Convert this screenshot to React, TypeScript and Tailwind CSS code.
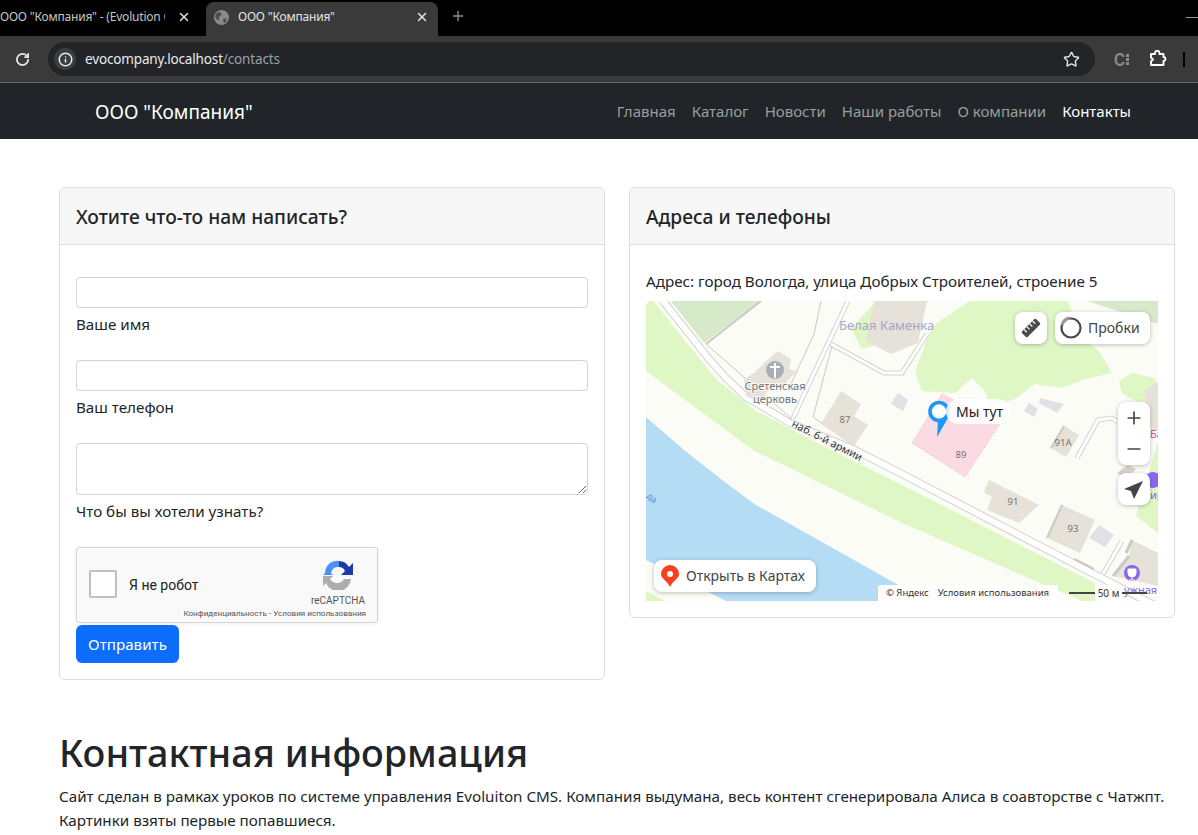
import { Info, Minus, Plus, RotateCw, Star, X } from 'lucide-react'

const links = ['Главная', 'Каталог', 'Новости', 'Наши работы', 'О компании']

function BrowserBar() {
    return (
        <div className="font-['Noto_Sans',sans-serif]">
            <div className="h-9 bg-black flex items-end text-[12px] relative">
                <div className="w-[206px] h-[34px] pb-[4px] flex items-center text-[#c4c7c5] overflow-hidden">
                    <span className="w-[165px] overflow-hidden whitespace-nowrap shrink-0 tracking-[-0.2px]">ООО "Компания" - (Evolution CMS)</span>
                    <X size={14} strokeWidth={2.5} className="ml-[12px] text-[#e3e3e3] shrink-0" />
                </div>
                <div className="w-[232px] h-[34px] pb-[4px] bg-[#3a3a3a] rounded-t-lg flex items-center pl-[8px] pr-[9px] text-[#e3e3e3]">
                    <svg width="15" height="15" viewBox="0 0 16 16" className="shrink-0">
                        <circle cx="8" cy="8" r="8" fill="#8a8a8a" />
                        <path d="M3 3 L7 2 L8 5 L5 8 L6 11 L3 10 L1 7 Z M10 9 L14 9 L12 14 L10 13 Z" fill="#4d4d4d" />
                    </svg>
                    <span className="ml-[9px] tracking-[-0.2px]">ООО "Компания"</span>
                    <X size={14} strokeWidth={2.5} className="ml-auto" />
                </div>
                <Plus size={16} className="ml-[12px] mb-[12px] text-[#8e8e8e]" />
                <div className="absolute right-0 top-[17px] w-3 h-px bg-[#999]" />
            </div>
            <div className="h-[46px] bg-[#3a3a3a] flex items-center relative">
                <RotateCw size={15} strokeWidth={2.8} className="ml-[15px] text-[#e8e8e8] shrink-0" />
                <div className="ml-[18px] w-[1047px] h-[34px] rounded-full bg-[#222428] flex items-center pl-[6px] pr-[15px] shrink-0">
                    <div className="w-[22px] h-[22px] rounded-full bg-[#3a3c40] flex items-center justify-center">
                        <Info size={15} strokeWidth={2.4} className="text-[#e8e8e8]" />
                    </div>
                    <span className="ml-[9px] text-[13.5px] text-[#e8eaed] tracking-[-0.15px]">
                        evocompany.localhost<span className="text-[#9aa0a6]">/contacts</span>
                    </span>
                    <Star size={17} strokeWidth={2} className="ml-auto text-[#e3e3e3]" />
                </div>
                <div className="ml-[19px] flex items-center gap-[1px] text-[#8a8a8a] shrink-0">
                    <span className="font-['Liberation_Sans',sans-serif] font-bold text-[19px] leading-none scale-x-[0.8] origin-left w-[11px]">C</span>
                    <div className="flex flex-col gap-[1px]">
                        <span className="w-[3px] h-[3px] bg-[#8a8a8a]" />
                        <span className="w-[3px] h-[3px] bg-[#8a8a8a]" />
                        <span className="w-[3px] h-[3px] bg-[#8a8a8a]" />
                    </div>
                </div>
                <svg width="18" height="18" viewBox="0 0 18 18" className="ml-[20px] shrink-0" fill="none" stroke="#fff" strokeWidth="1.9" strokeLinejoin="round">
                    <path d="M2 4 H6 V3 A2.2 2.2 0 0 1 10.4 3 V4 H14.5 V7 H15 A2.1 2.1 0 0 1 15 11 H14.5 V15 H2 V11.5 L4 9.5 L2 7.5 Z" />
                </svg>
                <div className="absolute left-[1183px] top-[16px] w-[2px] h-[15px] bg-black" />
            </div>
            <div className="h-px bg-[#6a6a6a]" />
        </div>
    )
}

function Navbar() {
    return (
        <nav className="h-[56px] pt-px bg-[#212529] flex items-center pl-[95px] pr-[67px]">
            <span className="text-[19px] text-white">ООО "Компания"</span>
            <div className="ml-auto mb-[2px] flex items-center gap-4 text-[15px] text-[#9b9d9f]">
                {links.map((link) => (
                    <span key={link}>{link}</span>
                ))}
                <span className="text-white">Контакты</span>
            </div>
        </nav>
    )
}

function Field({ label, area }: { label: string; area?: boolean }) {
    return (
        <div className="mb-[24px]">
            <div className={`${area ? 'h-[52px]' : 'h-[31px]'} bg-white border border-[#ced4da] rounded relative`}>
                {area && (
                    <svg width="10" height="10" className="absolute right-0 bottom-0" viewBox="0 0 10 10">
                        <path d="M2 9 L9 2 M6 9 L9 6" stroke="#666" strokeWidth="1" />
                    </svg>
                )}
            </div>
            <div className="mt-[4px] h-6 leading-6">{label}</div>
        </div>
    )
}

function Captcha() {
    return (
        <div className="w-[302px] h-[76px] bg-[#f9f9f9] border border-[#d6d6d6] rounded-[3px] shadow-[0_0_4px_rgba(0,0,0,0.08)] relative font-['Roboto',sans-serif]">
            <div className="absolute left-[12px] top-[22px] w-[28px] h-[28px] bg-white border-2 border-[#c1c1c1] rounded-[2px]" />
            <span className="absolute left-[52px] top-[28px] text-[14px] leading-[18px] text-[#222]">Я не робот</span>
            <svg className="absolute left-[245px] top-[10px]" width="32" height="32" viewBox="0 0 32 32">
                <path d="M3 15 A12 12 0 0 1 17 3 L17 9 A7 7 0 0 0 9 15 L11 17 L1 17 Z" fill="#4a90f5" />
                <path d="M17 3 A12 12 0 0 1 27 9 L31 5 L31 17 L19 17 L23 13 A7 7 0 0 0 17 9 Z" fill="#1c3aa9" />
                <path d="M1 18 L11 18 L8 21 A8 8 0 0 0 22 21 L29 21 A13 13 0 0 1 4 25 L1 28 Z" fill="#adadad" />
            </svg>
            <span className="absolute right-[12px] top-[46px] text-[10px] leading-[14px] text-[#555]">reCAPTCHA</span>
            <span className="absolute right-[11px] top-[59px] text-[8.1px] leading-[12px] text-[#555] whitespace-nowrap">Конфиденциальность - Условия использования</span>
        </div>
    )
}

function MapArt() {
    const road = (d: string, w = 6) => (
        <g fill="none">
            <path d={d} stroke="#d2d2ce" strokeWidth={w} />
            <path d={d} stroke="#ffffff" strokeWidth={w - 2} />
        </g>
    )
    const line = (d: string, w = 1) => <path d={d} fill="none" stroke="#c9c9c6" strokeWidth={w} />
    return (
        <svg className="absolute inset-0" width="512" height="300" viewBox="0 0 512 300">
            <rect width="512" height="300" fill="#fbfcf6" />
            <polygon points="0,116 38,149 80,182 110,204 256,286 275,300 80,300 0,259" fill="#b5dcf5" />
            <polygon points="0,4 3,0 7,0 70,78 110,110 185,149 256,184 449,282 470,300 436,300 256,222 107,149 0,70" fill="#def7c4" />
            <polygon points="0,290 12,296 20,300 0,300" fill="#def7c4" />
            <polygon points="25,0 115,0 58,42" fill="#d6e9c9" />
            <polygon points="441,0 512,0 512,23" fill="#d6e9c9" />
            <polygon points="324,0 422,0 436,37 453,50 466,72 439,78 416,87 389,83 369,98 343,107 339,90 326,77 309,92 276,90 269,70 283,33 289,23" fill="#def7c4" />
            <polygon points="473,80 486,72 509,77 512,100 496,103 476,93" fill="#def7c4" />
            <polygon points="512,140 490,215 512,232" fill="#def7c4" />
            <polygon points="205,28 230,0 282,0 270,12 262,36 216,48" fill="#def7c4" />

            {road('M17 0 L63 58 L80 77 L100 96 L144 122 L207 148 L256 173 L446 272 L512 306', 8)}
            {road('M202 0 L147 117', 5)}
            {road('M185 43 L238 72 L256 72 L281 33', 5)}
            {road('M431 157 L452 119 L466 117 L472 121', 5)}
            {road('M457 273 L476 240', 5)}
            {line('M115 0 L60 43', 2)}
            {line('M60 43 L146 118')}
            {line('M175 0 L168 33 L143 87')}
            {line('M186 45 L167 116 L208 145')}
            {line('M428 258 L448 268', 2)}

            <polygon points="118,62 132,50 145,58 143,68 150,70 135,88 128,84 112,100 100,95 98,78 108,72" fill="#e6e1d9" />
            <polygon points="228,0 281,0 272,42 245,53 220,40" fill="#e6e1d9" />
            <polygon points="296,93 354,123 319,176 266,142" fill="#fbdbe3" stroke="#f1a8b8" strokeWidth="1" strokeDasharray="1 2" />
            <polygon points="195,90 215,103 208,115 222,124 208,145 175,123" fill="#e6e1d9" />
            <polygon points="343,179 393,204 373,222 341,209 346,196 338,191" fill="#e6e1d9" />
            <polygon points="416,204 449,219 434,252 401,237" fill="#e6e1d9" />
            {line('M416 204 L401 237', 2)}
            <polygon points="453,224 468,234 459,246 443,237" fill="#e0e1e4" />
            <polygon points="418,125 433,134 420,156 405,147" fill="#e6e1d9" />
            {line('M418 125 L405 147', 2)}
            <polygon points="394,97 418,103 411,112 393,102" fill="#e0e1e4" />
            <polygon points="383,102 392,108 388,116 378,110" fill="#e0e1e4" />
            <polygon points="252,92 262,99 257,110 245,103" fill="#e0e1e4" />
            <polygon points="486,239 512,252 512,285 467,275 483,255" fill="#e6e1d9" />
            {line('M486 239 L480 252 M483 255 L467 275', 3)}
            <polygon points="498,90 512,80 512,130 505,130" fill="#e6e1d9" />
            <polygon points="471,172 482,164 490,168 480,178" fill="#d8d3cb" />

            <circle cx="129" cy="69" r="9" fill="#a8adb8" />
            <path d="M129 62 V77 M124 66 H134" stroke="#fff" strokeWidth="2" />
            <circle cx="486" cy="272" r="8" fill="#8b67f0" />
            <path d="M482 268 H490 V272 A4 4 0 0 1 482 272 Z M486 276 V279 M483 279 H489" fill="#fff" stroke="#fff" />
            <circle cx="507" cy="179" r="8" fill="#8b67f0" />

            <g fontFamily="'Noto Sans', sans-serif">
                <text x="193" y="29" fontSize="13" fill="#a5a4cc">Белая Каменка</text>
                <g fontSize="11" fill="#6f7480" textAnchor="middle" stroke="#fbfcf6" strokeWidth="2" paintOrder="stroke">
                    <text x="129" y="89">Сретенская</text>
                    <text x="129" y="102">церковь</text>
                </g>
                <g fontSize="9.5" fill="#77736d" textAnchor="middle">
                    <text x="199" y="122">87</text>
                    <text x="315" y="157">89</text>
                    <text x="367" y="204">91</text>
                    <text x="427" y="231">93</text>
                    <text x="417" y="145">91A</text>
                </g>
                <text x="0" y="0" fontSize="10.7" fill="#333" transform="translate(145 125) rotate(27)">наб. 6-й армии</text>
                <text x="504" y="137" fontSize="11" fill="#d0527f">Ба</text>
                <text x="504" y="198" fontSize="11" fill="#8b67f0">ир</text>
                <text x="478" y="293" fontSize="11" fill="#8b67f0">ужная</text>
                <text x="0" y="196" fontSize="9" fill="#5a8fd0" transform="rotate(40 0 196)">да</text>
            </g>

            <path d="M302 117 L291 136 L292 120 Z" fill="#1e98ff" />
            <circle cx="293" cy="110.5" r="9" fill="#fff" stroke="#1e98ff" strokeWidth="3.6" />
        </svg>
    )
}

function MapBlock() {
    const pill = 'absolute bg-white rounded-lg shadow-[0_1px_4px_rgba(0,0,0,0.25)]'
    return (
        <div className="w-[512px] h-[300px] relative overflow-hidden text-[#444]">
            <MapArt />
            <div className={`${pill} left-[369px] top-[11px] w-8 h-8 flex items-center justify-center`}>
                <svg width="22" height="22" viewBox="0 0 22 22">
                    <g transform="rotate(-45 11 11)">
                        <rect x="1" y="7" width="20" height="8" rx="1.5" fill="#4a4a4a" />
                        <path d="M5 7 V11 M9 7 V11 M13 7 V11 M17 7 V11" stroke="#fff" strokeWidth="1.2" />
                    </g>
                </svg>
            </div>
            <div className={`${pill} left-[409px] top-[11px] w-[95px] h-8 flex items-center pl-[4px] text-[14px]`}>
                <svg width="24" height="24" viewBox="0 0 24 24" className="shrink-0">
                    <circle cx="12" cy="12" r="9.5" fill="none" stroke="#4a4a4a" strokeWidth="2.2" />
                    <path d="M3 9 A9.5 9.5 0 0 1 11 2" fill="none" stroke="#999" strokeWidth="3" />
                </svg>
                <span className="ml-[5px]">Пробки</span>
            </div>
            <div className="absolute left-[300px] top-[98px] w-[64px] h-[25px] bg-white/85 rounded-full pl-[10px] text-[14px] leading-[25px] text-[#222]">Мы тут</div>
            <div className={`${pill} left-[472px] top-[101px] w-8 h-[63px] flex flex-col items-center justify-around`}>
                <Plus size={20} strokeWidth={2} />
                <Minus size={20} strokeWidth={2} />
            </div>
            <div className={`${pill} left-[472px] top-[172px] w-8 h-8`}>
                <svg width="32" height="32" viewBox="0 0 32 32">
                    <path d="M6 16 L25 8 L16 26 L13 18 Z" fill="#444" />
                </svg>
            </div>
            <div className={`${pill} left-[8px] top-[259px] w-[162px] h-8 flex items-center pl-[7px] text-[14px]`}>
                <svg width="18" height="22" viewBox="0 0 18 22" className="shrink-0">
                    <path d="M9 0 A9 9 0 0 1 18 9 C18 14 12 15 9 22 C6 15 0 14 0 9 A9 9 0 0 1 9 0 Z" fill="#fc3f1d" />
                    <circle cx="9" cy="9" r="3" fill="#fff" />
                </svg>
                <span className="ml-[7px]">Открыть в Картах</span>
            </div>
            <div className="absolute left-[232px] top-[284px] w-[180px] h-4 bg-white rounded-tl-[3px] flex items-center pl-[8px] text-[9.5px] text-[#333] whitespace-nowrap">
                <span>© Яндекс</span>
                <span className="ml-[9px]">Условия использования</span>
            </div>
            <div className="absolute left-[423px] top-[291px] w-[78px] h-[2px] bg-[#444]" />
            <div className="absolute left-[449px] top-[284px] w-[27px] h-4 bg-white text-center text-[10px] leading-4 text-[#333] whitespace-nowrap">50 м</div>
        </div>
    )
}

export default function App() {
    return (
        <div className="h-[835px] overflow-hidden bg-white text-[#212529] font-['Noto_Sans','Liberation_Sans',sans-serif] text-[15.2px] leading-6">
            <BrowserBar />
            <Navbar />
            <main className="w-[1116px] ml-[59px] pt-12">
                <div className="grid grid-cols-2 gap-6 items-start">
                    <div className="border border-[#dcdddd] rounded-md">
                        <div className="h-[57px] pt-px px-4 bg-[#f7f7f7] border-b border-[#dcdddd] rounded-t-md flex items-center text-[19.2px] font-medium">Хотите что-то нам написать?</div>
                        <div className="p-4 pt-8">
                            <Field label="Ваше имя" />
                            <Field label="Ваш телефон" />
                            <Field label="Что бы вы хотели узнать?" area />
                            <Captcha />
                            <button className="mt-[2px] w-[103px] h-[38px] bg-[#0d6efd] text-white rounded-md">Отправить</button>
                        </div>
                    </div>
                    <div className="border border-[#dcdddd] rounded-md">
                        <div className="h-[57px] pt-px px-4 bg-[#f7f7f7] border-b border-[#dcdddd] rounded-t-md flex items-center text-[19.2px] font-medium">Адреса и телефоны</div>
                        <div className="p-4 pt-[24px]">
                            <p className="mb-[8px]">Адрес: город Вологда, улица Добрых Строителей, строение 5</p>
                            <MapBlock />
                        </div>
                    </div>
                </div>
                <h1 className="mt-[49px] mb-[7px] text-[37.8px] leading-[48px] font-medium">Контактная информация</h1>
                <p>Сайт сделан в рамках уроков по системе управления Evoluiton CMS. Компания выдумана, весь контент сгенерировала Алиса в соавторстве с Чатжпт. Картинки взяты первые попавшиеся.</p>
            </main>
        </div>
    )
}
